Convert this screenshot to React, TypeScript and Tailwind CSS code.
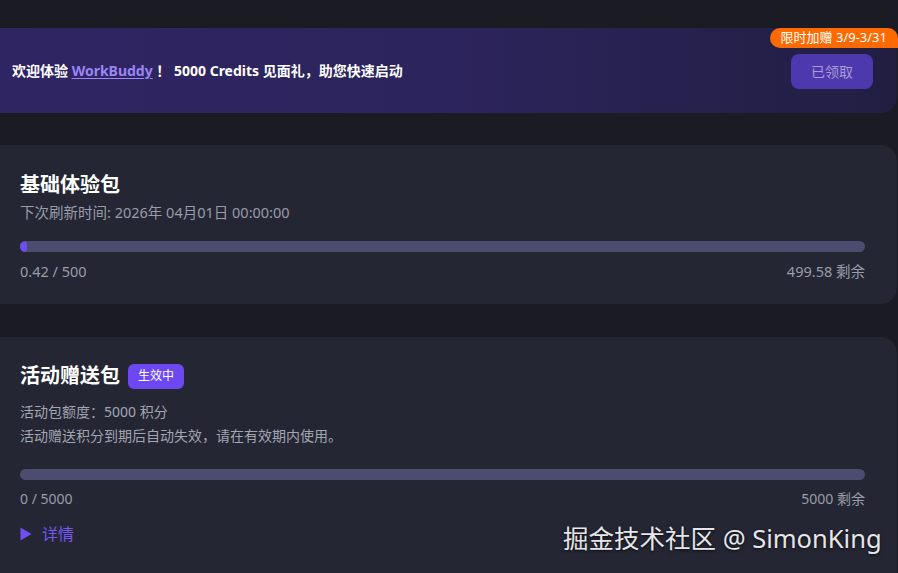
const font = { fontFamily: '"Noto Sans", "Noto Sans CJK SC", sans-serif' };

function Bar({ used, total }: { used: number; total: number }) {
  return (
    <div className="h-[11px] w-full overflow-hidden rounded-full bg-[#4b4c70]">
      <div className="h-full rounded-full bg-[#6b4ff0]" style={{ width: `${Math.max((used / total) * 100, used > 0 ? 0.8 : 0)}%` }} />
    </div>
  );
}

export default function App() {
  return (
    <div className="relative h-[573px] w-[898px] overflow-hidden bg-[#1b1b23] pt-[28px]" style={font}>
      <div className="relative mr-[1px] flex h-[85px] items-center justify-between rounded-r-2xl bg-gradient-to-r from-[#2f2563] via-[#2c245c] to-[#221e42] pl-[12px] pr-[24px]">
        <div className="text-[14px] font-bold text-white">
          欢迎体验 <span className="text-[#9b84f6] underline underline-offset-2">WorkBuddy</span> ！ 5000 Credits 见面礼，助您快速启动
        </div>
        <button className="mt-[2px] h-[35px] w-[82px] rounded-lg bg-[#4e38ae] text-[14px] text-[#a99dd8]">已领取</button>
        <div className="absolute right-[-1px] top-0 flex h-[20px] items-center rounded-bl-2xl rounded-tl-2xl rounded-tr-2xl bg-[#ff6a00] pl-[11px] pr-[11px] text-[13px] text-white">
          限时加赠 3/9-3/31
        </div>
      </div>

      <div className="mr-[1px] mt-[32px] rounded-r-2xl bg-[#242633] pb-[23px] pl-[20px] pr-[32px] pt-[26px]">
        <div className="text-[20px] font-bold leading-[28px] text-white">基础体验包</div>
        <div className="mt-[1px] text-[14.5px] leading-[24px] text-[#9a9cab]">下次刷新时间: 2026年 04月01日 00:00:00</div>
        <div className="mt-[17px]">
          <Bar used={0.42} total={500} />
        </div>
        <div className="mt-[9px] flex justify-between text-[14.5px] leading-[20px] text-[#9a9cab]">
          <span>0.42 / 500</span>
          <span>499.58 剩余</span>
        </div>
      </div>

      <div className="mr-[1px] mt-[33px] h-[300px] rounded-r-2xl bg-[#242633] pl-[20px] pr-[32px] pt-[25px]">
        <div className="flex h-[28px] items-center gap-[8px]">
          <span className="text-[20px] font-bold leading-[28px] text-white">活动赠送包</span>
          <span className="flex h-[25px] items-center rounded-md bg-[#6c47f2] px-[10px] text-[12px] text-white">生效中</span>
        </div>
        <div className="mt-[10px] text-[14px] leading-[24px] text-[#a3a5b2]">
          <div>活动包额度：5000 积分</div>
          <div>活动赠送积分到期后自动失效，请在有效期内使用。</div>
        </div>
        <div className="mt-[21px]">
          <Bar used={0} total={5000} />
        </div>
        <div className="mt-[9px] flex justify-between text-[14px] leading-[20px] text-[#9a9cab]">
          <span>0 / 5000</span>
          <span>5000 剩余</span>
        </div>
        <div className="mt-[15px] flex h-[20px] items-center gap-[10px] text-[16px] text-[#7357f2]">
          <svg width="12" height="14" viewBox="0 0 12 14">
            <path d="M0.5 0.5 L11.5 7 L0.5 13.5 Z" fill="#6f4ff2" />
          </svg>
          <span>详情</span>
        </div>
      </div>

      <div className="absolute left-[563px] top-[521px] text-[25.5px] leading-[34px] text-[#e6e6ea] [text-shadow:0_1px_3px_rgba(0,0,0,0.8)]">
        掘金技术社区 @ SimonKing
      </div>
    </div>
  );
}
